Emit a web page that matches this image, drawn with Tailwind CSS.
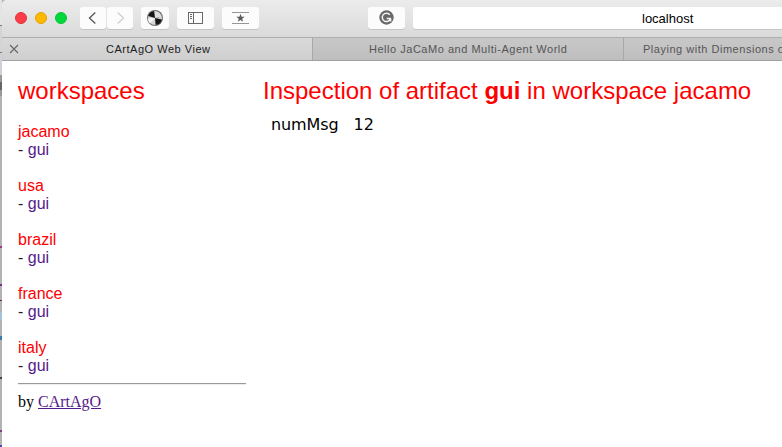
<!DOCTYPE html>
<html lang="en">
<head>
<meta charset="utf-8">
<title>CArtAgO Web View</title>
<script src="https://cdn.jsdelivr.net/npm/@tailwindcss/browser@4"></script>
</head>
<body class="flex h-[447px] w-[782px] overflow-hidden bg-[#b4b4b4] font-['Liberation_Sans',Arial,sans-serif]">
  <!-- Edge of the window behind -->
  <div class="flex h-full w-[2px] shrink-0 flex-col bg-[#b2b2b2]">
    <div class="h-[25px] bg-[#e4e4e4]"></div><div class="h-px bg-[#777]"></div>
    <div class="h-[26px] bg-[#d4d4d4]"></div><div class="h-px bg-[#777]"></div>
    <div class="h-[22px] bg-[#cfd0d8]"></div><div class="h-px bg-[#999]"></div>
    <div class="h-[6px] bg-[#999]"></div><div class="h-[8px] bg-[#666]"></div><div class="h-[6px] bg-[#999]"></div>
    <div class="mt-[150px] h-[2px] bg-[#a0367f]"></div>
    <div class="mt-[36px] h-[2px] bg-[#7d2a8c]"></div>
    <div class="mt-[14px] h-px bg-[#6b2060]"></div>
    <div class="mt-[11px] h-[8px] bg-[#9fc4d8]"></div>
    <div class="mt-[16px] h-[4px] bg-[#3a7cae]"></div>
    <div class="mt-[37px] h-[2px] bg-[#444]"></div>
    <div class="mt-[51px] h-[2px] bg-[#8a3a86]"></div>
    <div class="mt-[13px] h-[2px] bg-[#4848b8]"></div>
  </div>

  <div class="flex min-w-0 flex-1 flex-col overflow-hidden rounded-tl-[5px] bg-white">
    <!-- Toolbar -->
    <div class="flex h-[37px] shrink-0 items-start bg-linear-to-b from-[#ececec] to-[#dadada] pt-[7px]">
      <div class="ml-[13px] mt-[5px] flex gap-2">
        <div class="size-3 rounded-full border border-[#e0343c] bg-[#fc3c46]"></div>
        <div class="size-3 rounded-full border border-[#e6a200] bg-[#fdb900]"></div>
        <div class="size-3 rounded-full border border-[#0cc035] bg-[#00d93c]"></div>
      </div>
      <div class="ml-[13px] flex gap-px">
        <div class="flex h-[22px] w-[26px] items-center justify-center rounded-[3px] bg-[#fcfcfc] shadow-[0_1px_0_#c4c4c4]">
          <svg width="26" height="22" fill="none" stroke="#5c5c5c" stroke-width="1.4"><path d="M15.3 5.5 9.5 11l5.8 5.5"/></svg>
        </div>
        <div class="flex h-[22px] w-[26px] items-center justify-center rounded-[3px] bg-[#fcfcfc] shadow-[0_1px_0_#c4c4c4]">
          <svg width="26" height="22" fill="none" stroke="#cfcfcf" stroke-width="1.3"><path d="M10.7 5.5 16.5 11l-5.8 5.5"/></svg>
        </div>
      </div>
      <div class="ml-[8px] h-[22px] w-[28px] rounded-[3px] bg-[#fcfcfc] shadow-[0_1px_0_#c4c4c4]">
        <svg width="28" height="22"><circle cx="14" cy="11" r="8" fill="#6b6b6b"/><circle cx="14" cy="11" r="7" fill="#d6d6d6"/><path d="M14 11 15.5 4.1A7 7 0 0 0 7.4 8.8Z" fill="#bdbdbd"/><path d="M14 11 7.2 9A7 7 0 0 1 13 4.1ZM14 11 20.9 12.5A7 7 0 0 1 14.6 18ZM14 11l0-7a7 7 0 0 1 6.8 5.8Z" fill="#151515"/><path d="M14 11V4a7 7 0 0 1 6.9 6Z" fill="#ddd"/><path d="M14 11 9 16.5A7 7 0 0 1 7 11.5Z" fill="#f6f6f6"/></svg>
      </div>
      <div class="ml-[8px] h-[22px] w-[37px] rounded-[3px] bg-[#fcfcfc] shadow-[0_1px_0_#c4c4c4]">
        <svg width="37" height="22" fill="none" stroke="#686868"><rect x="11.5" y="5.5" width="14" height="11"/><path d="M16.5 5.5v11M13 7.5h2M13 9.5h2M13 11.5h2"/></svg>
      </div>
      <div class="ml-[8px] h-[22px] w-[37px] rounded-[3px] bg-[#fcfcfc] shadow-[0_1px_0_#c4c4c4]">
        <svg width="37" height="22"><path d="M10 5.5h17M10 16.5h17" stroke="#969696"/><path d="m18.5 6.8 1.1 3h3.1l-2.5 1.9.9 3-2.6-1.8-2.6 1.8.9-3-2.5-1.9h3.1Z" fill="#5c5c5c"/></svg>
      </div>
      <div class="ml-[109px] h-[22px] w-[37px] rounded-[3px] bg-[#fcfcfc] shadow-[0_1px_0_#c4c4c4]">
        <svg width="37" height="22" fill="none"><circle cx="18.5" cy="10.5" r="7.2" fill="#686868"/><path d="M21.8 7.8A4.2 4.2 0 1 0 22.5 11.5M18.7 11.4h4.3M22.6 11.4v3" stroke="#f4f4f4" stroke-width="1.5"/></svg>
      </div>
      <div class="ml-[8px] h-[22px] flex-1 rounded-l-[3px] bg-white pl-[229px] text-[13px] leading-[23px] tracking-[0px] text-black shadow-[0_1px_0_#c4c4c4]">localhost</div>
    </div>

    <!-- Tabs -->
    <div class="flex h-[24px] shrink-0 border-y border-t-[#aeaeae] border-b-[#a2a2a2] text-[11px] leading-[23px] whitespace-nowrap text-[#555]">
      <div class="flex w-[310px] shrink-0 bg-linear-to-b from-[#d9d9d9] to-[#cfcfcf] text-[#1c1c1c]">
        <svg class="ml-[7px] mt-[6px]" width="10" height="10" stroke="#666" stroke-width="1.1"><path d="m1 1 8 8M9 1 1 9"/></svg>
        <span class="ml-[87px] tracking-[0.52px]">CArtAgO Web View</span>
      </div>
      <div class="w-[311px] shrink-0 border-l border-[#a8a8a8] bg-linear-to-b from-[#c8c8c8] to-[#bebebe] pl-[56px] tracking-[0.52px]">Hello JaCaMo and Multi-Agent World</div>
      <div class="w-[180px] shrink-0 border-l border-[#a8a8a8] bg-linear-to-b from-[#c8c8c8] to-[#bebebe] pl-[19px] tracking-[0.52px]">Playing with Dimensions of</div>
    </div>

    <!-- Page -->
    <div class="flex flex-1 pl-4">
      <div class="w-[228px] shrink-0 pt-4 text-base leading-[18px] text-[#222]">
        <h1 class="mb-[18px] text-2xl leading-[28px] text-[#f00]">workspaces</h1>
        <div class="mb-[18px]"><div class="text-[#f00]">jacamo</div><div>- <a class="text-[#551a8b]">gui</a></div></div>
        <div class="mb-[18px]"><div class="text-[#f00]">usa</div><div>- <a class="text-[#551a8b]">gui</a></div></div>
        <div class="mb-[18px]"><div class="text-[#f00]">brazil</div><div>- <a class="text-[#551a8b]">gui</a></div></div>
        <div class="mb-[18px]"><div class="text-[#f00]">france</div><div>- <a class="text-[#551a8b]">gui</a></div></div>
        <div><div class="text-[#f00]">italy</div><div>- <a class="text-[#551a8b]">gui</a></div></div>
        <div class="mt-[8px] h-[2px] border-t border-b border-t-[#999] border-b-[#eee]"></div>
        <div class="mt-[8px] font-['Liberation_Serif','Times_New_Roman',serif] text-black">by <a class="text-[#551a8b] underline">CArtAgO</a></div>
      </div>
      <div class="ml-[17px] flex-1 pt-4 whitespace-nowrap">
        <h1 class="text-2xl leading-[28px] text-[#f00]">Inspection of artifact <b>gui</b> in workspace jacamo</h1>
        <div class="mt-[10px] ml-[8px] flex gap-[15px] font-['DejaVu_Sans',Verdana,sans-serif] text-base leading-[20px] tracking-[-0.1px] text-black"><span>numMsg</span><span>12</span></div>
      </div>
    </div>
  </div>
</body>
</html>
